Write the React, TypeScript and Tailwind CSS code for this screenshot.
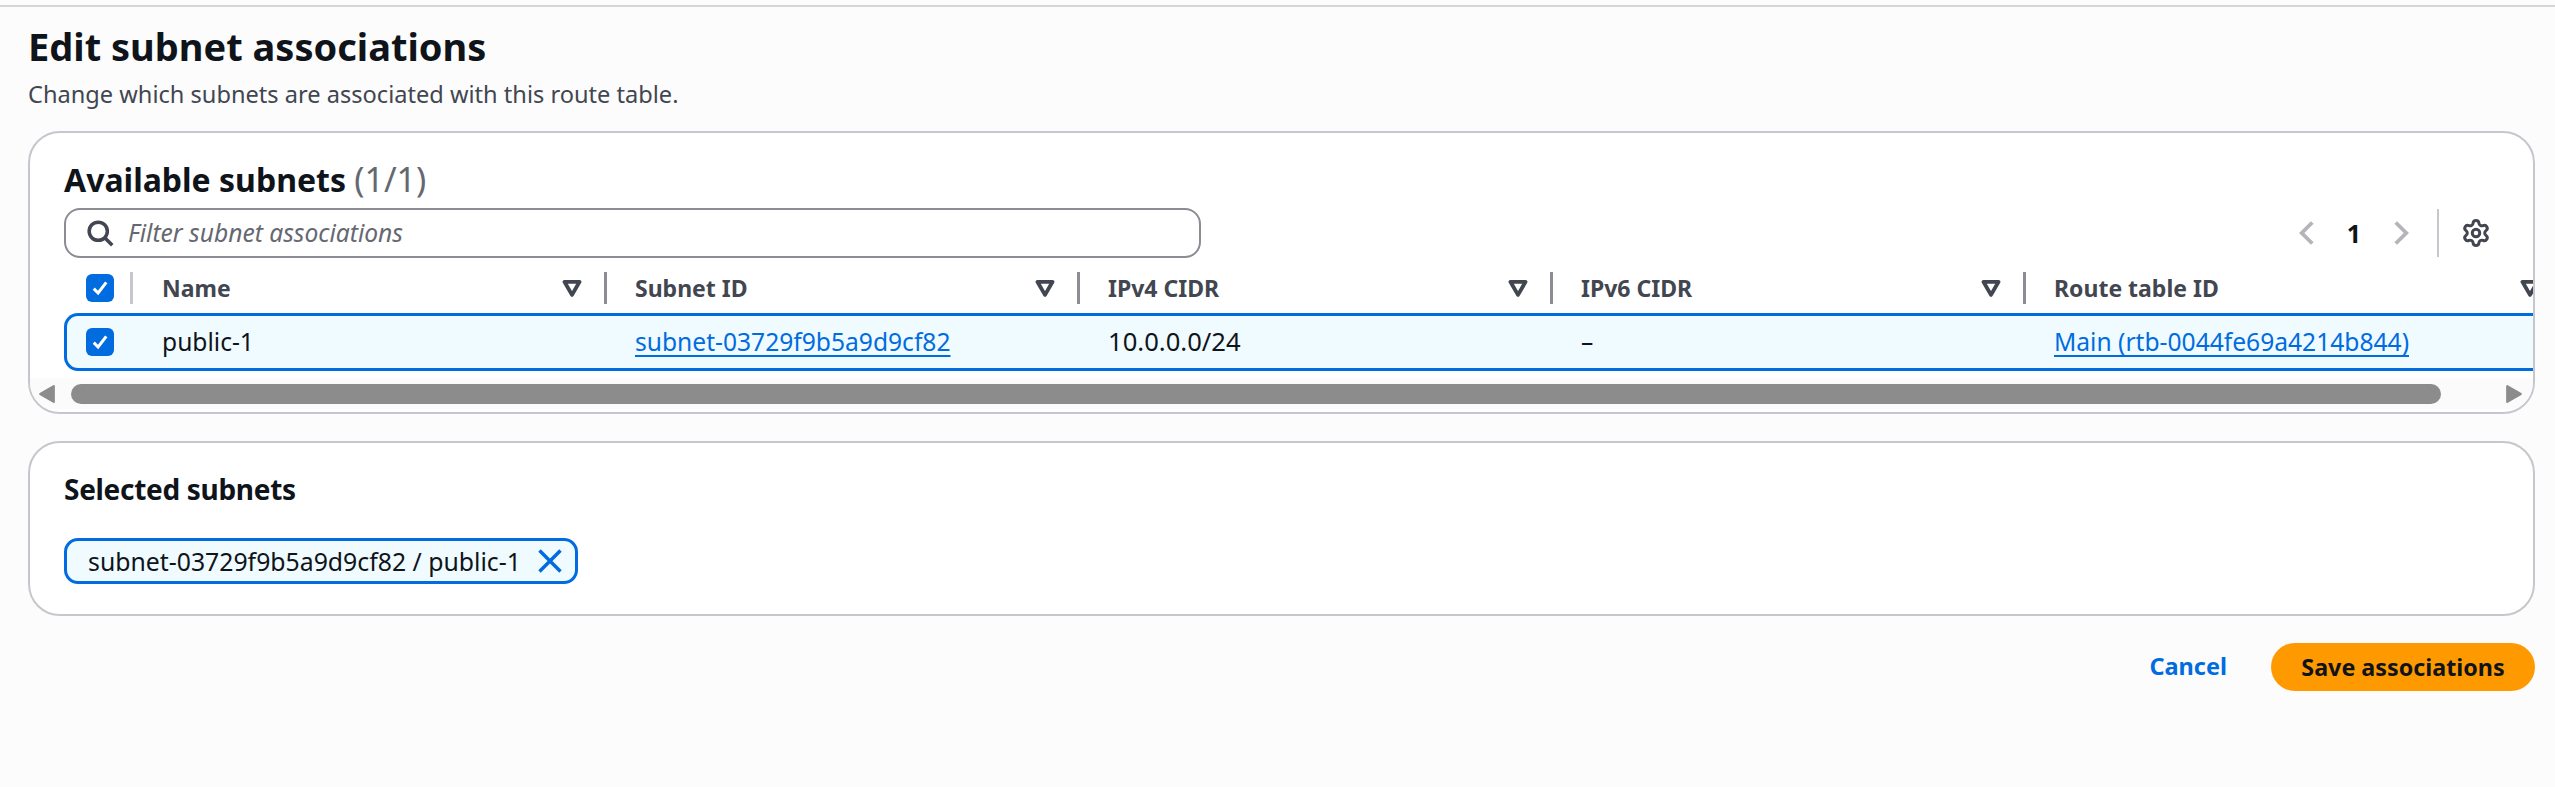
import { Settings } from "lucide-react";

const columns = [
  { name: "Name", value: "public-1", size: "text-[24.6px]" },
  { name: "Subnet ID", value: "subnet-03729f9b5a9d9cf82", size: "text-[24.6px]", link: true },
  { name: "IPv4 CIDR", value: "10.0.0.0/24", size: "text-[25.6px]" },
  { name: "IPv6 CIDR", value: "–", size: "text-[24.6px]" },
  { name: "Route table ID", value: "Main (rtb-0044fe69a4214b844)", size: "text-[24.6px]", link: true },
];

function Checkbox() {
  return (
    <span className="flex h-[28px] w-[28px] items-center justify-center rounded-[6px] bg-[#006ce0]">
      <svg viewBox="0 0 16 16" className="h-[20px] w-[20px]" fill="none" stroke="white" strokeWidth="2.4">
        <path d="M3 8.5 6.5 12 13 3.5" />
      </svg>
    </span>
  );
}

function SortIcon() {
  return (
    <svg viewBox="0 0 16 16" className="h-[22px] w-[22px] shrink-0" fill="none" stroke="#424650" strokeWidth="2.8">
      <path d="M2.5 3.5h11L8 13z" strokeLinejoin="round" />
    </svg>
  );
}

export default function App() {
  return (
    <div className="min-h-screen bg-[#fcfcfd] pt-[5px] font-['Noto_Sans',sans-serif] text-[#0f141a]">
      <div className="h-[2px] bg-[#d5d5da]" />
      <div className="px-[28px] pr-[20px]">
        <h1 className="mt-[17px] text-[38px] leading-[44px] font-bold">Edit subnet associations</h1>
        <p className="mt-[11px] text-[23.6px] leading-[30px] text-[#424650]">Change which subnets are associated with this route table.</p>

        <section className="mt-[22px] h-[283px] overflow-hidden rounded-[32px] border-2 border-[#c6c6cd] bg-white">
          <div className="pt-[26px]">
            <h2 className="pl-[34px] text-[32px] leading-[40px] font-bold">
              Available subnets <span className="text-[34px] font-normal text-[#656871]">(1/1)</span>
            </h2>
            <div className="mt-[8px] flex items-center justify-between pr-[42px] pl-[34px]">
              <div className="flex h-[50px] w-[1137px] items-center gap-[14px] rounded-[16px] border-2 border-[#8c8c94] bg-white px-[20px]">
                <svg viewBox="0 0 16 16" className="h-[28px] w-[28px]" fill="none" stroke="#424650" strokeWidth="2">
                  <circle cx="7" cy="7" r="5.2" />
                  <path d="m11 11 4 4" />
                </svg>
                <span className="text-[24.6px] text-[#656871] italic">Filter subnet associations</span>
              </div>
              <div className="flex items-center">
                <svg viewBox="0 0 16 16" className="h-[28px] w-[28px]" fill="none" stroke="#b4b4bb" strokeWidth="2.2">
                  <path d="M11 2 5 8l6 6" />
                </svg>
                <span className="mx-[26px] text-[25px] leading-[30px] font-bold">1</span>
                <svg viewBox="0 0 16 16" className="h-[28px] w-[28px]" fill="none" stroke="#b4b4bb" strokeWidth="2.2">
                  <path d="m5 2 6 6-6 6" />
                </svg>
                <div className="mx-[22px] h-[48px] w-[2px] bg-[#c6c6cd]" />
                <Settings className="h-[30px] w-[30px] text-[#424650]" strokeWidth={2.4} />
              </div>
            </div>
          </div>

          <div className="mt-[5px] flex h-[50px] items-center">
            <div className="flex w-[104px] shrink-0 items-center pl-[56px]">
              <Checkbox />
              <div className="ml-[16px] h-[32px] w-[3px] bg-[#c6c6cd]" />
            </div>
            {columns.map((c, i) => (
              <div key={c.name} className={`flex shrink-0 items-center pl-[28px] ${i === 4 ? "w-[515px]" : "w-[473px]"}`}>
                <span className="flex-1 text-[23px] font-bold text-[#424650]">{c.name}</span>
                <SortIcon />
                {i < 4 && <div className="ml-[21px] h-[32px] w-[3px] bg-[#8c8c94]" />}
              </div>
            ))}
          </div>

          <div className="ml-[34px] flex h-[58px] items-center overflow-hidden rounded-l-[14px] border-y-[3px] border-l-[3px] border-[#006ce0] bg-[#f0fbff]">
            <div className="flex w-[47px] shrink-0 justify-end">
              <Checkbox />
            </div>
            <div className="w-[48px] shrink-0" />
            {columns.map((c) => (
              <div key={c.name} className={`w-[473px] shrink-0 pr-[4px] leading-[30px] ${c.size}`}>
                {c.link ? (
                  <a className="text-[#006ce0] underline decoration-2 underline-offset-[4px]">{c.value}</a>
                ) : (
                  c.value
                )}
              </div>
            ))}
          </div>

          <div className="mt-[7px] flex h-[31px] items-center bg-[#fbfbfb] pr-[10px] pl-[8px]">
            <svg viewBox="0 0 16 16" className="h-[24px] w-[18px] shrink-0" fill="#8c8c8c">
              <path d="M14 1v14L2 8z" stroke="#8c8c8c" strokeWidth="2" strokeLinejoin="round" />
            </svg>
            <div className="ml-[15px] h-[20px] w-[2370px] rounded-full bg-[#8c8c8c]" />
            <div className="flex-1" />
            <svg viewBox="0 0 16 16" className="h-[24px] w-[18px] shrink-0" fill="#8c8c8c">
              <path d="M2 1v14l12-7z" stroke="#8c8c8c" strokeWidth="2" strokeLinejoin="round" />
            </svg>
          </div>
        </section>

        <section className="mt-[27px] h-[175px] rounded-[32px] border-2 border-[#c6c6cd] bg-white pt-[26px] pl-[34px]">
          <h2 className="text-[28px] leading-[40px] font-bold tracking-[-0.3px]">Selected subnets</h2>
          <div className="mt-[29px] inline-flex h-[46px] items-center gap-[15px] rounded-[14px] border-[3px] border-[#006ce0] bg-[#f0fbff] pr-[11px] pl-[21px]">
            <span className="text-[24.8px] leading-[30px]">subnet-03729f9b5a9d9cf82 / public-1</span>
            <svg viewBox="0 0 16 16" className="h-[28px] w-[28px]" fill="none" stroke="#006ce0" strokeWidth="2">
              <path d="m2 2 12 12M14 2 2 14" />
            </svg>
          </div>
        </section>

        <div className="mt-[27px] flex items-center justify-end">
          <a className="mr-[44px] text-[23.5px] font-bold text-[#006ce0]">Cancel</a>
          <button className="flex h-[48px] w-[264px] items-center justify-center rounded-full bg-[#ff9900] text-[23.3px] font-bold">
            Save associations
          </button>
        </div>
      </div>
    </div>
  );
}
